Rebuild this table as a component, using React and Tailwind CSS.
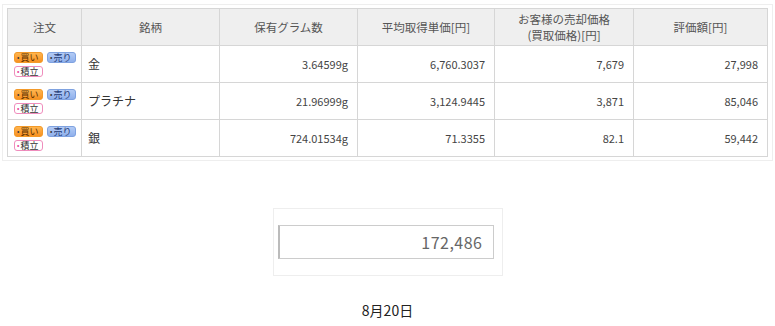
import React from 'react';

const rows = [
  { name: '金', grams: '3.64599g', avg: '6,760.3037', sell: '7,679', value: '27,998' },
  { name: 'プラチナ', grams: '21.96999g', avg: '3,124.9445', sell: '3,871', value: '85,046' },
  { name: '銀', grams: '724.01534g', avg: '71.3355', sell: '82.1', value: '59,442' },
];

const Badge = ({ kind, children }) => {
  const styles = {
    buy: 'border-[#f39a2a] bg-gradient-to-b from-[#ffb54d] to-[#f79120] text-[#5a3000]',
    sell: 'border-[#7fa2e0] bg-gradient-to-b from-[#b3cbf5] to-[#8fb0ec] text-[#1f3a75]',
    save: 'border-[#ef8dbd] bg-white text-[#333]',
  };
  const dot = kind === 'save' ? 'text-[#e8469a]' : 'text-[#3a3a3a]';
  return (
    <span className={`inline-flex h-[11px] w-[29px] items-center rounded-[3px] border pl-[2px] text-[9px] leading-none ${styles[kind]}`}>
      <span className={`mr-[1px] text-[7px] ${dot}`}>•</span>
      {children}
    </span>
  );
};

export default function App() {
  const th = 'border border-[#d6d6d6] bg-[#efefef] text-center font-normal text-[#555] text-[11.5px] leading-[16px]';
  const td = 'border border-[#d6d6d6] text-right pr-[9px] text-[11px] text-[#444]';
  return (
    <div className="w-[775px] bg-white pt-[4px] font-['Noto_Sans_CJK_JP',sans-serif]">
      <div className="mx-[2px] border border-[#eeeeee] px-[4px] py-[3px]">
        <table className="w-[761px] table-fixed border-collapse">
          <colgroup>
            <col className="w-[74px]" />
            <col className="w-[138px]" />
            <col className="w-[138px]" />
            <col className="w-[137px]" />
            <col className="w-[139px]" />
            <col />
          </colgroup>
          <thead>
            <tr className="h-[37px]">
              <th className={th}>注文</th>
              <th className={th}>銘柄</th>
              <th className={th}>保有グラム数</th>
              <th className={th}>平均取得単価[円]</th>
              <th className={th}>
                お客様の売却価格
                <br />
                (買取価格)[円]
              </th>
              <th className={th}>評価額[円]</th>
            </tr>
          </thead>
          <tbody>
            {rows.map((r) => (
              <tr key={r.name} className="h-[37px]">
                <td className="border border-[#d6d6d6] pl-[6px] align-top pt-[6px]">
                  <div className="flex gap-[4px]">
                    <Badge kind="buy">買い</Badge>
                    <Badge kind="sell">売り</Badge>
                  </div>
                  <div className="mt-[3px] flex">
                    <Badge kind="save">積立</Badge>
                  </div>
                </td>
                <td className="border border-[#d6d6d6] pl-[6px] text-[12px] text-[#333]">{r.name}</td>
                <td className={td}>{r.grams}</td>
                <td className={td}>{r.avg}</td>
                <td className={td}>{r.sell}</td>
                <td className={td}>{r.value}</td>
              </tr>
            ))}
          </tbody>
        </table>
      </div>

      <div className="mt-[47px] flex justify-center">
        <div className="w-[230px] border border-[#eeeeee] pb-[16px] pl-[4px] pr-[8px] pt-[16px]">
          <div className="flex h-[34px] items-center justify-end border border-[#cccccc] border-l-[2px] border-l-[#bbbbbb] pr-[10px] text-[16px] text-[#666] tracking-[0.5px]">
            172,486
          </div>
        </div>
      </div>

      <div className="mt-[24px] text-center text-[14px] text-[#222]">8月20日</div>
    </div>
  );
}
